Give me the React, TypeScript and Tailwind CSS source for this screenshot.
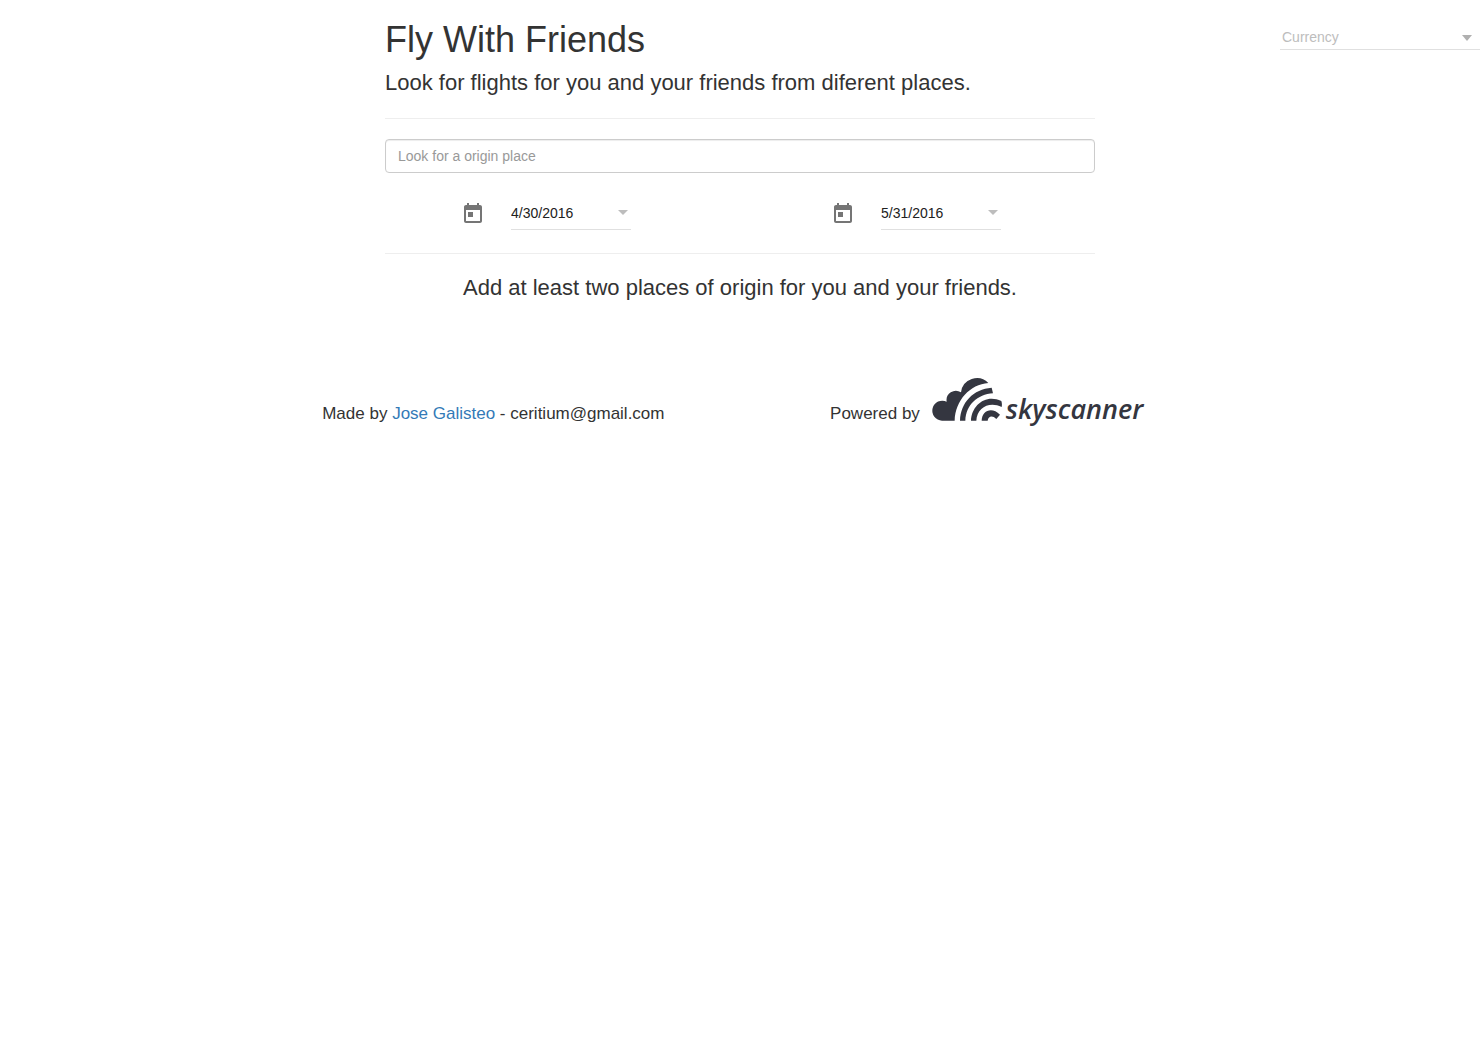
import React from "react";

function CalendarIcon() {
  return (
    <svg viewBox="0 0 24 24" className="size-6 fill-[#757575]" aria-hidden="true">
      <path d="M7 10h5v5H7zM19 3h-1V1h-2v2H8V1H6v2H5c-1.11 0-1.99.9-1.99 2L3 19c0 1.1.89 2 2 2h14c1.1 0 2-.9 2-2V5c0-1.1-.9-2-2-2zm0 16H5V8h14v11z" />
    </svg>
  );
}

function DateField({ label, value }: { label: string; value: string }) {
  return (
    <div className="mx-auto flex w-[204px] items-start">
      <button type="button" aria-label={`Open ${label} calendar`} className="px-2 pt-[9px]">
        <CalendarIcon />
      </button>
      <div className="ml-[18px] mt-1 flex h-[33px] w-[120px] items-center border-b border-[#e0e0e0]">
        <input
          type="text"
          aria-label={label}
          defaultValue={value}
          className="w-[100px] min-w-0 bg-transparent text-sm text-[#212121] outline-none"
        />
        <button type="button" aria-label={`Choose ${label}`} className="ml-auto mr-[3px] pb-0.5">
          <svg viewBox="0 0 10 5" className="block h-[5px] w-2.5 fill-[#bdbdbd]" aria-hidden="true">
            <path d="M0 0h10L5 5z" />
          </svg>
        </button>
      </div>
    </div>
  );
}

function CurrencySelect() {
  return (
    <div className="mt-6 flex h-[26px] w-[200px] max-w-full items-center justify-self-end border-b border-[#e0e0e0]">
      <select
        aria-label="Currency"
        defaultValue=""
        className="min-w-0 flex-1 appearance-none bg-transparent pl-0.5 text-sm text-[#bdbdbd] outline-none"
      >
        <option value="">Currency</option>
        <option value="EUR">EUR</option>
        <option value="GBP">GBP</option>
        <option value="USD">USD</option>
      </select>
      <svg viewBox="0 0 10 6" className="pointer-events-none mt-0.5 mr-2 h-1.5 w-2.5 fill-[#b0b0b0]" aria-hidden="true">
        <path d="M0 0h10L5 6z" />
      </svg>
    </div>
  );
}

function SkyscannerLogo() {
  return (
    <span className="flex items-start text-[#343640]">
      <svg viewBox="36 23 210 129" className="h-[43px] w-[70px] fill-current" aria-hidden="true">
        <path d="M66 151A30 30 0 1 1 80 94A28 28 0 0 1 123 66A48 48 0 0 1 205 38C150 42 106 90 104 151z" />
        <path d="M120 151C122 96 160 56 215 52L219 69C172 72 138 104 136 151z" />
        <path d="M153 151C155 104 198 70 244 92Q247 101 245 110C208 92 171 112 169 151z" />
        <path d="M185 151C186 120 216 108 240 133L229 146C217 133 204 138 203 151z" />
      </svg>
      <span className="mt-[15px] ml-1 font-['Open_Sans',sans-serif] text-[27px] leading-8 font-semibold italic">
        skyscanner
      </span>
    </span>
  );
}

export default function App() {
  return (
    <div className="min-h-screen bg-white font-['Liberation_Sans',Arial,sans-serif] text-[#333]">
      <div className="grid grid-cols-[minmax(0,1fr)_minmax(0,710px)_minmax(0,1fr)]">
        <main className="col-start-2">
          <header className="border-b border-[#eee] pt-5 pb-5">
            <h1 className="text-4xl leading-10">Fly With Friends</h1>
            <p className="mt-2 text-[22px] leading-[30px]">
              Look for flights for you and your friends from diferent places.
            </p>
          </header>
          <input
            type="text"
            aria-label="Origin place"
            placeholder="Look for a origin place"
            className="mt-5 block h-[34px] w-full rounded border border-[#ccc] px-3 text-sm shadow-[inset_0_1px_1px_rgba(0,0,0,0.075)] outline-none placeholder:text-[#999]"
          />
          <div className="-mx-[15px] mt-5 grid h-10 grid-cols-2">
            <DateField label="Departure date" value="4/30/2016" />
            <DateField label="Return date" value="5/31/2016" />
          </div>
          <hr className="mt-5 border-[#eee]" />
          <p className="mt-[19px] text-center text-[22px] leading-[30px]">
            Add at least two places of origin for you and your friends.
          </p>
        </main>
        <CurrencySelect />
      </div>
      <footer className="mx-auto mt-[75px] grid w-2/3 grid-cols-2 text-[17px] leading-6">
        <p className="pt-6 text-center">
          Made by{" "}
          <a href="#jose-galisteo" className="text-[#337ab7]">
            Jose Galisteo
          </a>{" "}
          - ceritium@gmail.com
        </p>
        <div className="flex justify-center gap-3">
          <span className="pt-6">Powered by</span>
          <SkyscannerLogo />
        </div>
      </footer>
    </div>
  );
}
